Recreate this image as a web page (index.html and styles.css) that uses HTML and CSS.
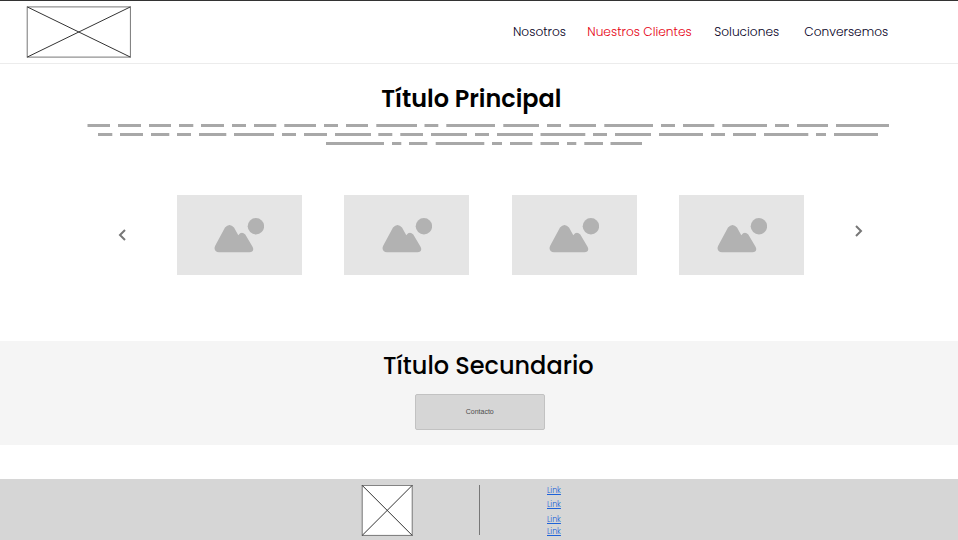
FILE: index.html
```html
<!DOCTYPE html>
<html lang="es">
<head>
<meta charset="utf-8">
<title>Nuestros Clientes</title>
<link rel="stylesheet" href="styles.css">
</head>
<body>
<svg class="defs" width="0" height="0">
  <symbol id="picture" viewBox="0 0 50 36">
    <circle cx="41.9" cy="8.3" r="8.2"/>
    <path d="M11 9.5Q15.500 4.500 20 9.500L24.300 17.300Q27.500 12.800 31.300 16.500L38.400 28.500C40.500 32 38.500 34.200 35.500 34.200H5C1 34.200-.5 30.800 1.300 27.500Z"/>
  </symbol>
</svg>
<header class="header">
  <svg class="logo" width="105" height="52" viewBox="0 0 105 52"><rect x="1.200" y=".9" width="103.200" height="50.200"/><path d="M1.200 .9L104.400 51.100M104.400 .9L1.200 51.100"/></svg>
  <nav class="nav">
    <a class="nav-about">Nosotros</a>
    <a class="nav-clients">Nuestros Clientes</a>
    <a class="nav-solutions">Soluciones</a>
    <a class="nav-talk">Conversemos</a>
  </nav>
</header>
<main>
  <h1 class="title"><span>Título Principal</span></h1>
  <svg class="copy" width="958" height="21" viewBox="0 0 958 21">
    <path d="M87.500 1.500H110M118 1.500H141M149 1.500H171M179 1.500H193.300M201 1.500H224M232 1.500H246M254 1.500H276.300M284.300 1.500H316M324 1.500H338M346 1.500H368M376.300 1.500H417M424.500 1.500H438.300M446.300 1.500H495M503.300 1.500H539M547 1.500H561M569.300 1.500H596M604.300 1.500H653M661 1.500H675M683 1.500H714.300M722.300 1.500H767M775 1.500H789M797 1.500H828M836 1.500H889"/>
    <path d="M98 10.500H112.300M120 10.500H143M151 10.500H169.300M177 10.500H191M199 10.500H226.300M234 10.500H274M282 10.500H296M304 10.500H327M335 10.500H371M378.300 10.500H392.300M400.300 10.500H423M431 10.500H467M475 10.500H489M497 10.500H533M540.500 10.500H585.300M593 10.500H607M615 10.500H651M659 10.500H703M711 10.500H725M733 10.500H756M764 10.500H808.300M816 10.500H826M834 10.500H878"/>
    <path d="M326 19.500H384M392 19.500H401.300M409 19.500H427.300M435.700 19.500H484.300M492 19.500H502M510 19.500H532.300M540.500 19.500H559M567 19.500H576.300M584.300 19.500H603M610.500 19.500H642"/>
  </svg>
  <section class="carousel">
    <svg class="arrow prev" width="8" height="12" viewBox="0 0 8 12"><path d="M7 1L2 6L7 11"/></svg>
    <div class="slides">
      <div class="slide"><svg><use href="#picture"/></svg></div>
      <div class="slide"><svg><use href="#picture"/></svg></div>
      <div class="slide"><svg><use href="#picture"/></svg></div>
      <div class="slide"><svg><use href="#picture"/></svg></div>
    </div>
    <svg class="arrow next" width="8" height="12" viewBox="0 0 8 12"><path d="M1 1L6 6L1 11"/></svg>
  </section>
  <section class="contact">
    <h2 class="subtitle"><span>Título Secundario</span></h2>
    <button class="button">Contacto</button>
  </section>
</main>
<footer class="footer">
  <svg class="mark" width="52" height="52" viewBox="0 0 52 52"><rect x="1.200" y=".4" width="50" height="50"/><path d="M1.200 .4L51.200 50.400M51.200 .4L1.200 50.400"/></svg>
  <div class="divider"></div>
  <ul class="links">
    <li><a href="#">Link</a></li>
    <li><a href="#">Link</a></li>
    <li><a href="#">Link</a></li>
    <li><a href="#">Link</a></li>
  </ul>
</footer>
</body>
</html>
```
FILE: styles.css
```css
* { box-sizing: border-box; }
body {
  margin: 0;
  height: 540px;
  overflow: hidden;
  background: #fff;
  color: #000;
  font-family: Poppins, Inter, "Open Sans", sans-serif;
}
svg { display: block; flex: none; }
.defs { position: absolute; }
.header {
  display: flex;
  height: 64px;
  padding: 5px 0 0 26px;
  border-top: 1px solid #333;
  border-bottom: 1px solid #ececec;
}
.logo rect, .mark rect { fill: #fff; stroke: #777; }
.logo path, .mark path { fill: none; stroke: #333; }
.nav {
  display: flex;
  margin-left: 382px;
  padding-top: 16px;
  font-size: 12.2px;
  line-height: 20px;
  font-weight: 300;
  color: #06001e;
  white-space: nowrap;
}
.nav a { flex: none; }
.nav-about { width: 74.300px; }
.nav-clients { width: 127px; color: #e60012; }
.nav-solutions { width: 90px; }
.title, .subtitle {
  margin: 0;
  font-size: 24px;
  line-height: 36px;
  white-space: nowrap;
}
.title { padding: 17px 0 0 381.300px; font-weight: 600; font-size: 23.900px; }
.copy { margin-top: 7px; }
.copy path { stroke: #a8a8a8; stroke-width: 3; }
.carousel { display: flex; padding: 50px 0 0 118px; height: 196px; }
.arrow path { fill: none; stroke: #777; stroke-width: 2; }
.prev { margin-top: 34px; }
.next { margin: 30px 0 0 51px; }
.slides { display: flex; gap: 42.500px; margin-left: 50.700px; }
.slide {
  display: flex;
  width: 125px;
  height: 80px;
  padding: 23px 0 0 37.500px;
  background: #e5e5e5;
}
.slide svg { width: 50px; height: 36px; fill: #b2b2b2; }
.contact { height: 104px; padding-top: 7px; background: #f5f5f5; }
.subtitle { padding-left: 383px; font-weight: 500; }
.button {
  display: block;
  width: 129.500px;
  height: 36px;
  margin: 10px 0 0 415px;
  padding: 0 0 2px;
  border: 1px solid #c2c2c2;
  border-radius: 2px;
  background: #d6d6d6;
  color: #4d4d4d;
  font: 7px "Liberation Sans", sans-serif;
}
.footer {
  display: flex;
  height: 61px;
  margin-top: 34px;
  padding: 6px 0 0 361px;
  background: #d6d6d6;
}
.divider { width: 1px; height: 50px; margin-left: 66px; background: #777; }
.links {
  display: grid;
  grid-template-rows: 14px 15px 12px 12px;
  margin: 0 0 0 67px;
  padding: 0;
  list-style: none;
  font-size: 7.900px;
  font-weight: 300;
  line-height: 12px;
}
.links a { color: #1f62d8; }
```
